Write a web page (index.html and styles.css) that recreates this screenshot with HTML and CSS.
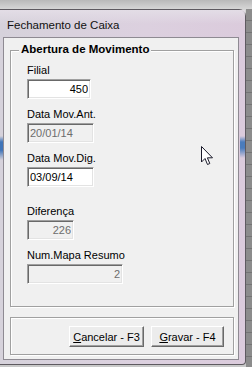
FILE: index.html
```html
<!DOCTYPE html>
<html lang="pt">
<head>
<meta charset="UTF-8">
<meta name="viewport" content="width=device-width, initial-scale=1.0">
<title>Fechamento de Caixa</title>
<link rel="stylesheet" href="styles.css">
</head>
<body>
<div class="screen">
  <div class="window">
    <div class="titlebar">Fechamento de Caixa</div>
    <div class="client">
      <div class="group">
        <div class="group-title">Abertura de Movimento</div>

        <div class="field">
          <label>Filial</label>
          <input class="edit num w64" value="450" readonly>
        </div>
        <div class="field">
          <label>Data Mov.Ant.</label>
          <input class="edit off w67" value="20/01/14" readonly>
        </div>
        <div class="field">
          <label>Data Mov.Dig.</label>
          <input class="edit w67" value="03/09/14" readonly>
        </div>
        <div class="field wide-gap">
          <label>Diferença</label>
          <input class="edit off num w47" value="226" readonly>
        </div>
        <div class="field">
          <label>Num.Mapa Resumo</label>
          <input class="edit off num w96" value="2" readonly>
        </div>
      </div>

      <div class="panel">
        <button class="btn btn-cancel"><u>C</u>ancelar - F3</button>
        <button class="btn btn-save"><u>G</u>ravar - F4</button>
      </div>
    </div>
  </div>
  <div class="behind"></div>
</div>

<svg class="cursor" width="13" height="20" viewBox="0 0 13 20">
  <path d="M0.5 0.5 L0.5 16 L4 12.5 L6.5 18.5 L8.8 17.5 L6.4 11.8 L11.5 11.8 Z" fill="#fff" stroke="#1a1a2a" stroke-width="1"/>
</svg>
</body>
</html>
```

FILE: styles.css
```css
body {
  margin: 0;
  width: 252px;
  height: 367px;
  overflow: hidden;
  position: relative;
  background: linear-gradient(#b9b9b9, #d6d6d6 9px, #c9c9c9);
  font-family: "Liberation Sans", Arial, sans-serif;
  font-size: 11px;
  color: #000;
}

.screen {
  display: flex;
  padding-top: 9px;
}

.window {
  width: 246px;
  height: 356px;
  box-sizing: border-box;
  border: 1px solid #5e5a60;
  border-left: none;
  border-radius: 0 7px 4px 0;
  background:
    linear-gradient(rgba(60, 110, 180, 0), #3f74b8 6px, #3f74b8 14px, rgba(60, 110, 180, 0)) 0 126px / 3px 24px no-repeat,
    linear-gradient(rgba(60, 110, 180, 0), #4a7cbc 6px, #4a7cbc 12px, rgba(60, 110, 180, 0)) 240px 126px / 5px 22px no-repeat,
    linear-gradient(to right, #d6d2db, #dcd0df 60%, #dbcbdc);
  display: flex;
  flex-direction: column;
}

.titlebar {
  height: 27px;
  box-sizing: border-box;
  padding: 8px 0 0 7px;
  line-height: 15px;
  font-size: 11.5px;
  color: #111;
  background: linear-gradient(#e3dde6, rgba(220, 210, 224, 0) 14px);
}

.client {
  flex: 1;
  margin: 0 6px 4px 3px;
  border: 1px solid #8e8a92;
  background: #f0f0f0;
  padding: 12px 4px 4px 6px;
}

.behind {
  flex: 1;
  height: 358px;
  background: repeating-linear-gradient(#8c8c8c 0, #8c8c8c 11px, #747474 11px, #747474 12px);
}

/* group box */
.group {
  border: 1px solid #a0a0a0;
  box-shadow: inset 1px 1px #fff, 1px 1px #fff;
  padding: 0 0 22px 16px;
}

.group-title {
  width: fit-content;
  margin: -8px 0 8px -8px;
  padding: 0 2px;
  line-height: 13px;
  font-weight: bold;
  font-size: 11.5px;
  background: #f0f0f0;
}

.field {
  display: flex;
  flex-direction: column;
  align-items: flex-start;
  gap: 2px;
  margin-bottom: 9px;
}

.field label {
  line-height: 13px;
}

.field:last-child {
  margin-bottom: 0;
}

.wide-gap {
  margin-top: 18px;
}

.edit {
  height: 20px;
  box-sizing: border-box;
  margin: 0;
  padding: 0 2px;
  border: 1px solid;
  border-color: #a0a0a0 #fff #fff #a0a0a0;
  box-shadow: inset 1px 1px #696969, inset -1px -1px #e3e3e3;
  background: #fff;
  font-family: "Liberation Sans", Arial, sans-serif;
  font-size: 11px;
  color: #000;
  outline: none;
}

.edit.num {
  text-align: right;
}

.edit.off {
  background: #f0f0f0;
  color: #6d6d6d;
}

.w64 { width: 64px; }
.w67 { width: 67px; }
.w47 { width: 47px; }
.w96 { width: 96px; }

/* button panel */
.panel {
  margin-top: 10px;
  border: 1px solid #a0a0a0;
  box-shadow: inset 1px 1px #fff, 1px 1px #fff;
  padding: 8px 9px 7px 0;
  display: flex;
  justify-content: flex-end;
  gap: 7px;
}

.btn {
  height: 21px;
  box-sizing: border-box;
  padding: 0;
  border: 1px solid;
  border-color: #fff #696969 #696969 #fff;
  box-shadow: inset -1px -1px #a0a0a0;
  background: #ececec;
  font-family: "Liberation Sans", Arial, sans-serif;
  font-size: 11px;
  color: #000;
}

.btn-cancel { width: 75px; }
.btn-save { width: 73px; }

.cursor {
  position: absolute;
  left: 201px;
  top: 146px;
}
```
